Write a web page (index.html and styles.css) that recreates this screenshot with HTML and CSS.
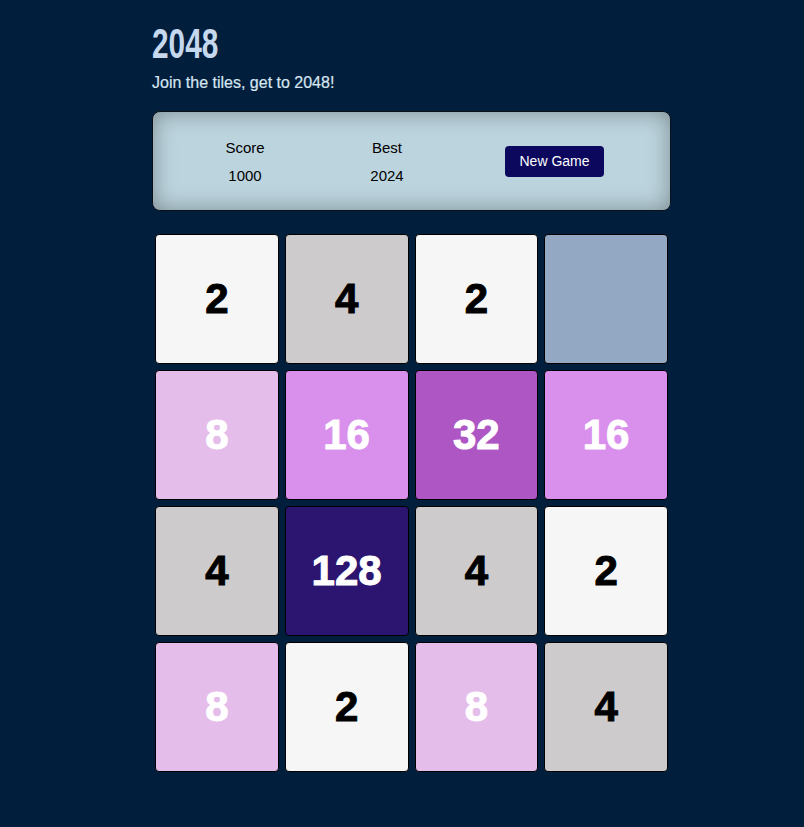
FILE: index.html
```html
<!DOCTYPE html>
<html>
<head>
<meta charset="utf-8">
<link rel="stylesheet" href="styles.css">
</head>
<body>
<div class="wrap">
  <h1 class="title"><span class="title-text">2048</span></h1>
  <p class="subtitle">Join the tiles, get to 2048!</p>
  <div class="panel">
    <div class="stat stat-score">
      <div class="stat-label">Score</div>
      <div class="stat-value">1000</div>
    </div>
    <div class="stat stat-best">
      <div class="stat-label">Best</div>
      <div class="stat-value">2024</div>
    </div>
    <button class="new-game">New Game</button>
  </div>
  <div class="board">
    <div class="tile t2">2</div>
    <div class="tile t4">4</div>
    <div class="tile t2">2</div>
    <div class="tile empty"></div>
    <div class="tile t8">8</div>
    <div class="tile t16">16</div>
    <div class="tile t32">32</div>
    <div class="tile t16">16</div>
    <div class="tile t4">4</div>
    <div class="tile t128">128</div>
    <div class="tile t4">4</div>
    <div class="tile t2">2</div>
    <div class="tile t8">8</div>
    <div class="tile t2">2</div>
    <div class="tile t8">8</div>
    <div class="tile t4">4</div>
  </div>
</div>
</body>
</html>
```

FILE: styles.css
```css
html, body {
  margin: 0;
  padding: 0;
  background: #011e3c;
}
body {
  font-family: "Liberation Sans", Arial, sans-serif;
  padding-left: 19px;
}
.wrap {
  width: 519px;
  margin: 0 auto;
  padding-top: 26px;
}
.title {
  margin: 0;
  font-family: "Liberation Sans", Arial, sans-serif;
  font-weight: bold;
  font-size: 42px;
  line-height: 36px;
  color: #c5d8ee;
}
.title-text {
  display: inline-block;
  transform: scaleX(0.71);
  transform-origin: left center;
}
.subtitle {
  margin: 11px 0 0 0;
  font-family: "Liberation Sans", Arial, sans-serif;
  font-size: 16px;
  line-height: 20px;
  color: #d6e6f2;
  -webkit-text-stroke: 0.2px currentColor;
}
.panel {
  margin-top: 18px;
  height: 98px;
  border: 1px solid #0a0f18;
  border-radius: 8px;
  background: #bcd4de;
  box-shadow: inset 0 0 22px rgba(0, 0, 0, 0.35);
  display: flex;
  align-items: center;
  padding-left: 62px;
  box-sizing: content-box;
  width: 455px;
}
.stat {
  width: 60px;
  text-align: center;
  color: #000;
  font-size: 15px;
  padding-top: 2px;
}
.stat-best {
  margin-left: 82px;
}
.stat-label {
  line-height: 20px;
}
.stat-value {
  margin-top: 8px;
  line-height: 20px;
}
.new-game {
  margin-left: 88px;
  width: 99px;
  height: 31px;
  border: none;
  border-radius: 4px;
  background: #0b085e;
  color: #fff;
  font-family: "Liberation Sans", Arial, sans-serif;
  font-size: 14px;
  padding: 0;
}
.board {
  margin-top: 20px;
  display: grid;
  grid-template-columns: repeat(4, 1fr);
}
.tile {
  margin: 3px;
  height: 130px;
  box-sizing: border-box;
  border: 1px solid #000;
  border-radius: 4px;
  display: flex;
  align-items: center;
  justify-content: center;
  font-family: "Liberation Sans", Arial, sans-serif;
  font-weight: bold;
  font-size: 42px;
  -webkit-text-stroke: 1px currentColor;
  color: #000;
}
.empty { background: #93a8c2; }
.t2 { background: #f6f6f6; }
.t4 { background: #cdcbcc; }
.t8 { background: #e4bdea; color: #fff; }
.t16 { background: #d990ec; color: #fff; }
.t32 { background: #ae56c3; color: #fff; }
.t128 { background: #2c1570; color: #fff; }
```
